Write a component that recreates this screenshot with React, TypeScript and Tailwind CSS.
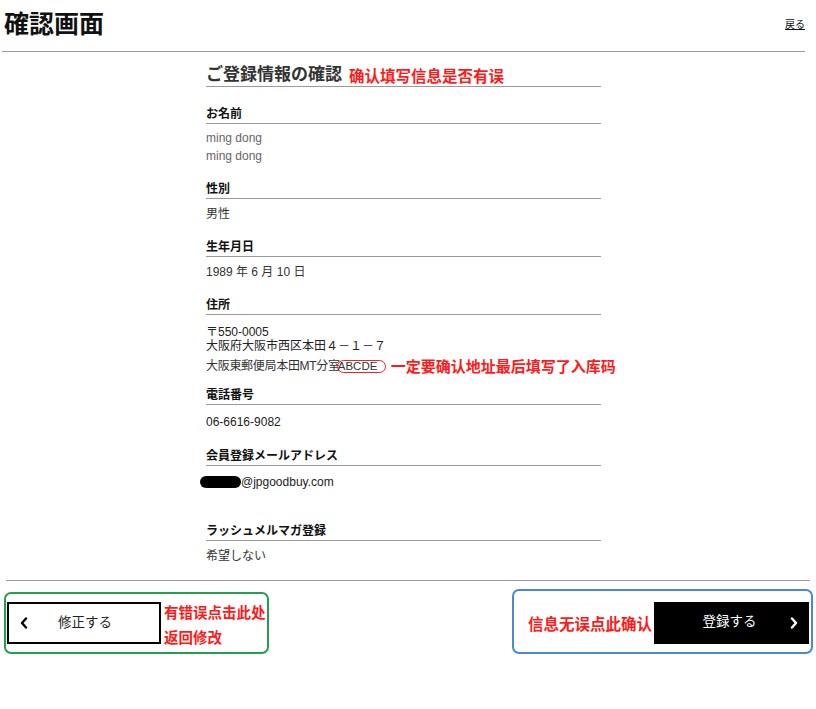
import React from "react";

const JP = { fontFamily: '"Liberation Sans", "Noto Sans CJK JP", sans-serif' };
const SC = { fontFamily: '"Noto Sans CJK SC", sans-serif' };

function Label({ children, className = "" }: { children: React.ReactNode; className?: string }) {
  return (
    <div className={`h-[19px] border-b border-[#9a9a9a] text-[12px] font-bold leading-[18px] text-[#111] ${className}`}>
      {children}
    </div>
  );
}

export default function App() {
  return (
    <div className="w-[816px] h-[709px] bg-white text-[#222]" style={JP}>
      {/* Header */}
      <div className="ml-[2px] w-[803px] h-[52px] border-b border-[#9a9a9a] flex items-center justify-between">
        <div className="pl-[2px] text-[25px] font-bold leading-none text-[#111] -mt-[2px]">確認画面</div>
        <a className="text-[10px] underline text-[#111] -mt-[2px]">戻る</a>
      </div>

      {/* Content */}
      <div className="ml-[206px] w-[395px]">
        <div className="mt-[12px] h-[23px] border-b border-[#9a9a9a] flex items-center gap-[7px]">
          <span className="text-[17px] font-bold leading-[22px] text-[#333]">ご登録情報の確認</span>
          <span className="text-[15.5px] font-bold leading-[22px] text-[#ff1a1a]" style={SC}>确认填写信息是否有误</span>
        </div>

        <Label className="mt-[18px]">お名前</Label>
        <div className="mt-[5px] text-[12px] leading-[18px] text-[#666]">
          <div>ming dong</div>
          <div>ming dong</div>
        </div>

        <Label className="mt-[15px]">性別</Label>
        <div className="mt-[6px] text-[12px] leading-[18px] text-[#333]">男性</div>

        <Label className="mt-[15px]">生年月日</Label>
        <div className="mt-[6px] text-[12px] leading-[18px] text-[#333]">1989 年 6 月 10 日</div>

        <Label className="mt-[15px]">住所</Label>
        <div className="mt-[10px] text-[12px] leading-[14px] text-[#222]">
          <div>〒550-0005</div>
          <div>大阪府大阪市西区本田４－１－７</div>
        </div>
        <div className="mt-[4px] h-[18px] flex items-center text-[12px] text-[#333] whitespace-nowrap">
          <span className="shrink-0 tracking-[-0.3px]">大阪東郵便局本田MT分室</span>
          <span className="-ml-[3px] shrink-0 inline-block h-[13px] w-[49px] rounded-full border-[1.5px] border-[#ff1a1a] leading-[10px] text-[11.5px]">ABCDE</span>
          <span className="ml-[5px] shrink-0 text-[15px] font-bold text-[#ff1a1a] leading-[18px]" style={SC}>一定要确认地址最后填写了入库码</span>
        </div>

        <Label className="mt-[11px]">電話番号</Label>
        <div className="mt-[8px] text-[12px] leading-[18px] text-[#222]">06-6616-9082</div>

        <Label className="mt-[16px]">会員登録メールアドレス</Label>
        <div className="mt-[7px] h-[18px] flex items-center text-[12px] text-[#222]">
          <span className="-ml-[6px] inline-block h-[12px] w-[41px] rounded-full bg-black"></span>
          <span>@jpgoodbuy.com</span>
        </div>

        <Label className="mt-[31px]">ラッシュメルマガ登録</Label>
        <div className="mt-[6px] text-[12px] leading-[18px] text-[#333]">希望しない</div>
      </div>

      {/* Divider */}
      <div className="ml-[6px] w-[804px] mt-[15px] border-t border-[#9a9a9a]"></div>

      {/* Buttons */}
      <div className="flex items-start justify-between pl-[4px] pr-[3px]">
        <div className="mt-[11px] w-[265px] h-[62px] rounded-[7px] border-2 border-[#22a14d] flex items-center pl-[1px]">
          <button className="w-[154px] h-[42px] border-2 border-black bg-white flex items-center relative">
            <svg className="absolute left-[11px]" width="8" height="12" viewBox="0 0 8 12">
              <path d="M6 1.5 L2 6 L6 10.5" fill="none" stroke="#000" strokeWidth="2.4" strokeLinecap="round" strokeLinejoin="round" />
            </svg>
            <span className="w-full text-center text-[13.5px] text-[#222] pl-[2px]">修正する</span>
          </button>
          <div className="ml-[3px] text-[14.5px] font-bold leading-[25px] text-[#ff1a1a] mt-[1px]" style={SC}>
            <div>有错误点击此处</div>
            <div>返回修改</div>
          </div>
        </div>

        <div className="mt-[8px] w-[301px] h-[65px] rounded-[7px] border-2 border-[#4a89d0] flex items-center justify-between pl-[14px] pr-[2px] pt-[2px]">
          <span className="text-[15.5px] font-bold text-[#ff1a1a] mt-[2px]" style={SC}>信息无误点此确认</span>
          <button className="w-[155px] h-[42px] bg-black flex items-center relative">
            <span className="w-full text-center text-[13.5px] text-white -ml-[2px]">登録する</span>
            <svg className="absolute right-[11px]" width="8" height="12" viewBox="0 0 8 12">
              <path d="M2 1.5 L6 6 L2 10.5" fill="none" stroke="#fff" strokeWidth="2.4" strokeLinecap="round" strokeLinejoin="round" />
            </svg>
          </button>
        </div>
      </div>
    </div>
  );
}
